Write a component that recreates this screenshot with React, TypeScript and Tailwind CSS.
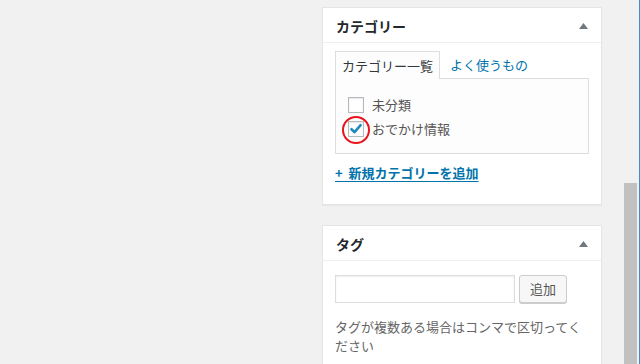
import React from 'react';

const Toggle = () => (
  <svg width="9" height="6" viewBox="0 0 9 6" className="block">
    <path d="M0 6 L4.5 0 L9 6 Z" fill="#72777c" />
  </svg>
);

const Checkbox = ({ checked }: { checked?: boolean }) => (
  <span className="relative flex h-[16px] w-[16px] shrink-0 items-center justify-center border border-[#b4b9be] bg-white shadow-[inset_0_1px_2px_rgba(0,0,0,0.1)]">
    {checked && (
      <svg width="14" height="14" viewBox="0 0 14 14" className="block">
        <path d="M2.5 7.2 L5.6 10.2 L11.6 3.2" fill="none" stroke="#1e8cbe" strokeWidth="2.6" strokeLinecap="round" strokeLinejoin="round" />
      </svg>
    )}
  </span>
);

const Postbox = ({ title, children }: { title: string; children: React.ReactNode }) => (
  <div className="border border-[#e5e5e5] bg-white shadow-[0_1px_1px_rgba(0,0,0,0.04)]">
    <div className="flex h-[35px] items-center justify-between border-b border-[#eee] pl-[13px] pr-[13px] pt-[1px]">
      <h2 className="text-[14px] font-semibold leading-[20px] text-[#23282d]">{title}</h2>
      <Toggle />
    </div>
    {children}
  </div>
);

export default function App() {
  return (
    <div className="flex h-[364px] w-[640px] overflow-hidden bg-[#f1f1f1] font-['Noto_Sans_CJK_JP',sans-serif] text-[13px] text-[#444]">
      <div className="w-[322px] shrink-0" />

      <div className="flex w-[280px] shrink-0 flex-col gap-[20px] pt-[7px]">
        {/* カテゴリー */}
        <Postbox title="カテゴリー">
          <div className="h-[161px] px-[12px] pt-[8px]">
            <div className="flex items-end">
              <span className="relative z-10 -mb-px border border-b-0 border-[#ddd] bg-[#fdfdfd] px-[6px] leading-[27px] text-[#32373c]">
                カテゴリー一覧
              </span>
              <span className="ml-[4px] px-[6px] leading-[27px] text-[#0073aa]">よく使うもの</span>
            </div>
            <div className="h-[76px] border border-[#ddd] bg-[#fdfdfd] pl-[12px] pt-[18px]">
              <div className="flex h-[16px] items-center gap-[8px]">
                <Checkbox />
                <span className="leading-[16px] text-[#555]">未分類</span>
              </div>
              <div className="relative mt-[8px] flex h-[16px] items-center gap-[8px]">
                <Checkbox checked />
                <span className="leading-[16px] text-[#555]">おでかけ情報</span>
                <span className="absolute left-[-6px] top-[-5px] h-[28px] w-[28px] rounded-full border-2 border-[#e8141e]" />
              </div>
            </div>
            <div className="mt-[9px] leading-[20px]">
              <a className="font-semibold text-[#0073aa] underline underline-offset-[3px]">+&nbsp;&nbsp;新規カテゴリーを追加</a>
            </div>
          </div>
        </Postbox>

        {/* タグ */}
        <Postbox title="タグ">
          <div className="px-[12px] pt-[14px] pb-[12px]">
            <div className="flex items-center gap-[4px]">
              <div className="h-[28px] w-[180px] border border-[#ddd] bg-white shadow-[inset_0_1px_2px_rgba(0,0,0,0.07)]" />
              <button className="h-[28px] w-[48px] rounded-[3px] border border-[#ccc] bg-[#f7f7f7] leading-[26px] text-[#555] shadow-[0_1px_0_#ccc]">
                追加
              </button>
            </div>
            <p className="mt-[14px] leading-[19px] text-[#666]">
              タグが複数ある場合はコンマで区切ってください
            </p>
          </div>
        </Postbox>
      </div>

      <div className="ml-[22px] mt-[183px] w-[13px] shrink-0 bg-[#c1c1c1]" />
      <div className="ml-[2px] w-px shrink-0 bg-[#3d8fcd]" />
    </div>
  );
}
